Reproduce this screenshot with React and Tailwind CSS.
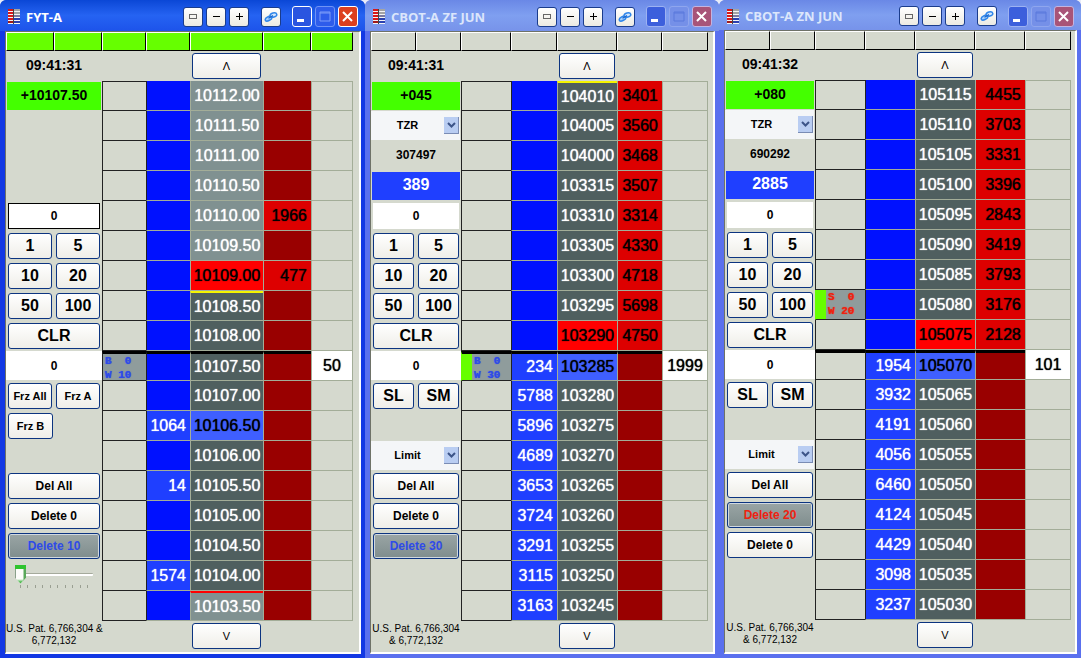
import React, { useState } from "react";
import clsx from "clsx";

const windows = [
  {
    title: "FYT-A",
    active: true,
    time: "09:41:31",
    titleHeight: "h-[31px]",
    panelWidth: "w-[96px]",
    bodyPad: "pr-[6px]",
    columns: "grid-cols-[44fr_44fr_73fr_48fr_42fr]",
    widths: ["w-[44px]", "w-[44px]", "w-[73px]", "w-[48px]", "w-[42px]"],
    strip: "bg-[#66ff00]",
    patent: ["U.S. Pat. 6,766,304 &", "6,772,132"],
    panel: [
      { type: "net", value: "+10107.50" },
      { type: "empty" },
      { type: "empty" },
      { type: "empty" },
      { type: "qty", label: "Order quantity", boxed: true },
      { type: "buttons", labels: ["1", "5"] },
      { type: "buttons", labels: ["10", "20"] },
      { type: "buttons", labels: ["50", "100"] },
      { type: "buttons", labels: ["CLR"] },
      { type: "position" },
      { type: "buttons", labels: ["Frz All", "Frz A"], size: "text-[11px]" },
      { type: "buttons", labels: ["Frz B", null], size: "text-[11px]" },
      { type: "empty" },
      { type: "buttons", labels: ["Del All"], size: "text-[12px]" },
      { type: "buttons", labels: ["Delete 0"], size: "text-[12px]" },
      { type: "delete", label: "Delete 10", color: "text-[#2f4be8]" },
      { type: "slider" },
      { type: "empty" },
    ],
    // price, bid, ask, price style
    rows: [
      ["10112.00", "", "", "light"],
      ["10111.50", "", "", "light"],
      ["10111.00", "", "", "light"],
      ["10110.50", "", "", "light"],
      ["10110.00", "", "1966", "light"],
      ["10109.50", "", "", "light"],
      ["10109.00", "", "477", "ask"],
      ["10108.50", "", "", "dark", "yellow"],
      ["10108.00", "", "", "dark"],
      ["10107.50", "", "", "dark"],
      ["10107.00", "", "", "dark"],
      ["10106.50", "1064", "", "bid"],
      ["10106.00", "", "", "dark"],
      ["10105.50", "14", "", "dark"],
      ["10105.00", "", "", "dark"],
      ["10104.50", "", "", "dark"],
      ["10104.00", "1574", "", "dark"],
      ["10103.50", "", "", "light", "red"],
    ],
    last: { row: 9, qty: "50" },
    order: { row: 9, side: "B", filled: "0", working: "10", fresh: false },
  },
  {
    title: "CBOT-A ZF JUN",
    active: false,
    time: "09:41:31",
    titleHeight: "h-[31px]",
    panelWidth: "w-[90px]",
    bodyPad: "pr-[5px]",
    columns: "grid-cols-[50fr_46fr_60fr_45fr_46fr]",
    widths: ["w-[50px]", "w-[46px]", "w-[60px]", "w-[45px]", "w-[46px]"],
    strip: "",
    patent: ["U.S. Pat. 6,766,304", "& 6,772,132"],
    panel: [
      { type: "net", value: "+045" },
      { type: "select", label: "Account", value: "TZR" },
      { type: "volume", value: "307497" },
      { type: "traded", value: "389" },
      { type: "qty", label: "Order quantity" },
      { type: "buttons", labels: ["1", "5"] },
      { type: "buttons", labels: ["10", "20"] },
      { type: "buttons", labels: ["50", "100"] },
      { type: "buttons", labels: ["CLR"] },
      { type: "position" },
      { type: "buttons", labels: ["SL", "SM"] },
      { type: "empty" },
      { type: "select", label: "Order type", value: "Limit" },
      { type: "buttons", labels: ["Del All"], size: "text-[12px]" },
      { type: "buttons", labels: ["Delete 0"], size: "text-[12px]" },
      { type: "delete", label: "Delete 30", color: "text-[#2f4be8]" },
      { type: "empty" },
      { type: "empty" },
    ],
    rows: [
      ["104010", "", "3401", "dark", "yellow"],
      ["104005", "", "3560", "dark"],
      ["104000", "", "3468", "dark"],
      ["103315", "", "3507", "dark"],
      ["103310", "", "3314", "dark"],
      ["103305", "", "4330", "dark"],
      ["103300", "", "4718", "dark"],
      ["103295", "", "5698", "dark"],
      ["103290", "", "4750", "ask"],
      ["103285", "234", "", "bid"],
      ["103280", "5788", "", "dark"],
      ["103275", "5896", "", "dark"],
      ["103270", "4689", "", "dark"],
      ["103265", "3653", "", "dark"],
      ["103260", "3724", "", "dark"],
      ["103255", "3291", "", "dark"],
      ["103250", "3115", "", "dark"],
      ["103245", "3163", "", "dark"],
    ],
    last: { row: 9, qty: "1999" },
    order: { row: 9, side: "B", filled: "0", working: "30", fresh: true },
  },
  {
    title: "CBOT-A ZN JUN",
    active: false,
    time: "09:41:32",
    titleHeight: "h-[30px]",
    panelWidth: "w-[90px]",
    bodyPad: "pr-[4px]",
    columns: "grid-cols-[50fr_50fr_60fr_50fr_46fr]",
    widths: ["w-[50px]", "w-[50px]", "w-[60px]", "w-[50px]", "w-[46px]"],
    strip: "",
    patent: ["U.S. Pat. 6,766,304", "& 6,772,132"],
    panel: [
      { type: "net", value: "+080" },
      { type: "select", label: "Account", value: "TZR" },
      { type: "volume", value: "690292" },
      { type: "traded", value: "2885" },
      { type: "qty", label: "Order quantity" },
      { type: "buttons", labels: ["1", "5"] },
      { type: "buttons", labels: ["10", "20"] },
      { type: "buttons", labels: ["50", "100"] },
      { type: "buttons", labels: ["CLR"] },
      { type: "position" },
      { type: "buttons", labels: ["SL", "SM"] },
      { type: "empty" },
      { type: "select", label: "Order type", value: "Limit" },
      { type: "buttons", labels: ["Del All"], size: "text-[12px]" },
      { type: "delete", label: "Delete 20", color: "text-[#ee2211]" },
      { type: "buttons", labels: ["Delete 0"], size: "text-[12px]" },
      { type: "empty" },
      { type: "empty" },
    ],
    rows: [
      ["105115", "", "4455", "dark"],
      ["105110", "", "3703", "dark"],
      ["105105", "", "3331", "dark"],
      ["105100", "", "3396", "dark"],
      ["105095", "", "2843", "dark"],
      ["105090", "", "3419", "dark"],
      ["105085", "", "3793", "dark"],
      ["105080", "", "3176", "dark"],
      ["105075", "", "2128", "ask"],
      ["105070", "1954", "", "bid"],
      ["105065", "3932", "", "dark"],
      ["105060", "4191", "", "dark"],
      ["105055", "4056", "", "dark"],
      ["105050", "6460", "", "dark"],
      ["105045", "4124", "", "dark"],
      ["105040", "4429", "", "dark"],
      ["105035", "3098", "", "dark"],
      ["105030", "3237", "", "dark"],
    ],
    last: { row: 9, qty: "101" },
    order: { row: 7, side: "S", filled: "0", working: "20", fresh: true },
  },
];

const priceStyles = {
  light: "bg-[#809191] text-white",
  dark: "bg-[#4f5f5f] text-white",
  ask: "bg-[#ff0000] text-black",
  bid: "bg-[#3f5fff] text-black",
};

function LadderIcon() {
  return (
    <svg width="12" height="15" viewBox="0 0 12 15" aria-hidden="true">
      <rect width="12" height="15" fill="#f4f4f4" />
      <path d="M0 0h5v2H0zM0 3h5v2H0zM0 6h5v2H0zM0 9h5v2H0z" fill="#d81818" />
      <path d="M0 12h5v2H0z" fill="#a01818" />
      <path d="M6 0h6v2H6zM6 3h6v2H6z" fill="#a4a4a4" />
      <path d="M6 6h6v2H6z" fill="#7a7aa0" />
      <path d="M6 9h6v2H6zM6 12h6v2H6z" fill="#2a40b0" />
      <path d="M5 0h1v15H5z" fill="#444" />
    </svg>
  );
}

function LinkIcon() {
  return (
    <svg width="14" height="12" viewBox="0 0 14 12" fill="none" aria-hidden="true">
      <ellipse cx="4.6" cy="7.600" rx="3.600" ry="1.900" transform="rotate(-28 4.600 7.600)" fill="#a8d0fa" stroke="#2f86ea" strokeWidth="1.500" />
      <ellipse cx="9.400" cy="4" rx="3.400" ry="2.100" transform="rotate(-14 9.400 4)" fill="#d2e7fd" stroke="#2f86ea" strokeWidth="1.500" />
      <path d="M4.500 7.200l4.500-2.600" stroke="#1c66cc" strokeWidth="1.300" />
    </svg>
  );
}

function ToolButton({ label, children }) {
  return (
    <button
      type="button"
      aria-label={label}
      className="flex h-[20px] w-[20px] items-center justify-center rounded-[3px] border border-[#1a3c8c] bg-linear-to-b from-white to-[#eceae2]"
    >
      {children}
    </button>
  );
}

function FrameButton({ label, className, children }) {
  return (
    <button
      type="button"
      aria-label={label}
      className={clsx("flex h-[21px] w-[20px] items-center justify-center rounded-[3px] border", className)}
    >
      <svg width="18" height="19" viewBox="0 0 18 19" fill="none" aria-hidden="true">
        {children}
      </svg>
    </button>
  );
}

function TitleBar({ win }) {
  return (
    <header
      className={clsx(
        "flex items-center rounded-t-[6px] pt-[2px] pr-[7px] pl-[8px]",
        win.titleHeight,
        win.active
          ? "bg-linear-to-b from-[#0a47d6] via-[#2563f2] to-[#1d53ea]"
          : "bg-linear-to-b from-[#6a88e6] via-[#7f9ff0] to-[#7793ea]"
      )}
    >
      <LadderIcon />
      <h2
        className={clsx(
          "ml-[6px] flex-1 truncate font-['Open_Sans',sans-serif] text-[13px] leading-[20px] font-bold",
          win.active ? "text-white" : "text-[#dce6fb]"
        )}
      >
        {win.title}
      </h2>
      <div className="flex gap-[3px]">
        <ToolButton label="Compact">
          <span className="h-[5px] w-[8px] border border-[#666]" />
        </ToolButton>
        <ToolButton label="Narrower">
          <span className="h-px w-[7px] bg-black" />
        </ToolButton>
        <ToolButton label="Wider">
          <svg width="7" height="7" viewBox="0 0 7 7" aria-hidden="true">
            <path d="M3 0h1v7H3zM0 3h7v1H0z" fill="#000" />
          </svg>
        </ToolButton>
      </div>
      <div className="ml-[12px]">
        <ToolButton label="Link">
          <LinkIcon />
        </ToolButton>
      </div>
      <div className="ml-[11px] flex gap-[3px]">
        <FrameButton
          label="Minimize"
          className={win.active ? "border-white bg-[#2a55e0]" : "border-[#9db2f2] bg-[#3c5fdc]"}
        >
          <path d="M4 12h7v3H4z" fill="#fff" />
        </FrameButton>
        <FrameButton
          label="Maximize"
          className={win.active ? "border-[#6f93f5] bg-[#2e5ceb]" : "border-[#8fa6ee] bg-[#7590e8]"}
        >
          <path d="M4 5h10v9H4zM4 6h10" stroke={win.active ? "#7c9cf8" : "#5b79dc"} strokeWidth="1" />
        </FrameButton>
        <FrameButton
          label="Close"
          className={win.active ? "border-white bg-[#dd3f1f]" : "border-[#c4b4e0] bg-[#a85478]"}
        >
          <path d="M4 5l9 9M13 5l-9 9" stroke="#fff" strokeWidth="2" />
        </FrameButton>
      </div>
    </header>
  );
}

function XpButton({ className, children }) {
  return (
    <button
      type="button"
      className={clsx(
        "h-[26px] min-w-0 flex-1 rounded-[3px] border border-[#0c3480] bg-linear-to-b from-white to-[#efeee8] leading-[24px] whitespace-nowrap",
        className
      )}
    >
      {children}
    </button>
  );
}

function PanelRow({ item }) {
  const [value, setValue] = useState("0");

  switch (item.type) {
    case "net":
      return (
        <div className="h-[30px] p-px">
          <div className="h-[28px] bg-[#44ff00] text-center text-[14px] leading-[26px] font-bold">{item.value}</div>
        </div>
      );
    case "volume":
      return <div className="h-[30px] text-center text-[12px] leading-[28px] font-bold">{item.value}</div>;
    case "traded":
      return (
        <div className="h-[30px] p-px">
          <div className="h-[28px] bg-[#1f3fff] text-center text-[16px] leading-[26px] font-bold text-white">
            {item.value}
          </div>
        </div>
      );
    case "select":
      return (
        <div className="relative h-[30px] pr-px pb-px">
          <select
            aria-label={item.label}
            defaultValue={item.value}
            className="h-full w-full appearance-none bg-[#f4f6f8] pr-[16px] text-center text-[11px] font-bold [text-align-last:center]"
          >
            <option>{item.value}</option>
          </select>
          <span className="pointer-events-none absolute top-[6px] right-[2px] flex h-[17px] w-[15px] items-center justify-center border-r border-b border-[#7a8cb4] bg-[#b9cdf2]">
            <svg width="9" height="6" viewBox="0 0 9 6" fill="none" aria-hidden="true">
              <path d="M1 1l3.500 3.500L8 1" stroke="#3c5488" strokeWidth="2" />
            </svg>
          </span>
        </div>
      );
    case "qty":
      return (
        <div className="h-[30px] p-[2px]">
          <input
            aria-label={item.label}
            value={value}
            onChange={(e) => setValue(e.target.value)}
            className={clsx(
              "block h-[26px] w-full border bg-white text-center text-[12px] font-bold",
              item.boxed ? "border-black" : "border-white"
            )}
          />
        </div>
      );
    case "position":
      return (
        <div className="h-[30px] pb-px">
          <input
            aria-label="Position"
            value={value}
            onChange={(e) => setValue(e.target.value)}
            className="block h-[29px] w-full bg-white text-center text-[12px] font-bold"
          />
        </div>
      );
    case "buttons":
      return (
        <div className="flex h-[30px] gap-[4px] p-[2px]">
          {item.labels.map((label, i) =>
            label ? (
              <XpButton key={i} className={clsx("font-bold", item.size || "text-[16px]")}>
                {label}
              </XpButton>
            ) : (
              <span key={i} className="flex-1" />
            )
          )}
        </div>
      );
    case "delete":
      return (
        <div className="flex h-[30px] p-[2px]">
          <button
            type="button"
            className={clsx(
              "h-[26px] flex-1 rounded-[3px] border border-[#0c3480] bg-linear-to-b from-[#9aa5a5] to-[#7f8d8d] text-[12px] leading-[22px] font-bold inset-ring inset-ring-[#d0d8e0]",
              item.color
            )}
          >
            {item.label}
          </button>
        </div>
      );
    case "slider":
      return (
        <div className="h-[30px] pt-[3px] pr-[9px] pl-[9px]">
          <input
            type="range"
            aria-label="Depth"
            min="0"
            max="9"
            defaultValue="0"
            className="block h-[20px] w-full appearance-none bg-transparent [&::-webkit-slider-runnable-track]:h-[3px] [&::-webkit-slider-runnable-track]:rounded-[1px] [&::-webkit-slider-runnable-track]:border-t [&::-webkit-slider-runnable-track]:border-[#a5aa9c] [&::-webkit-slider-runnable-track]:bg-white [&::-webkit-slider-thumb]:-mt-[9px] [&::-webkit-slider-thumb]:h-[19px] [&::-webkit-slider-thumb]:w-[11px] [&::-webkit-slider-thumb]:appearance-none [&::-webkit-slider-thumb]:bg-[linear-gradient(to_bottom,#2fc42f_0_4px,transparent_4px_14px,#4cb84c_17px),linear-gradient(to_right,#8aa08a_0_1px,#fcfcfa_1px_8px,#5aa85a_9px)] [&::-webkit-slider-thumb]:[clip-path:polygon(0_0,100%_0,100%_70%,50%_100%,0_70%)]"
          />
          <div className="flex justify-between px-[5px] pt-px">
            {Array.from({ length: 10 }, (_, i) => (
              <span key={i} className="h-[3px] w-px bg-[#9a9f92]" />
            ))}
          </div>
        </div>
      );
    default:
      return <div className="h-[30px]" />;
  }
}

function WorkingOrder({ order, tall }) {
  return (
    <div className={clsx("flex", tall ? "h-[29px]" : "h-[26px]")}>
      {order.fresh && <span className="w-[10px] shrink-0 bg-[#66ff00]" />}
      <div
        className={clsx(
          "min-w-0 flex-1 bg-[#8f9c9c] pl-[2px] text-left font-['Liberation_Mono',monospace] text-[11px] leading-[14px] font-bold whitespace-pre",
          order.side === "B" ? "text-[#2f4be8]" : "text-[#ee2211]"
        )}
      >
        <div>{`${order.side} ${order.filled.padStart(2)}`}</div>
        <div>{`W ${order.working.padStart(2)}`}</div>
      </div>
    </div>
  );
}

function Ladder({ win }) {
  return (
    <table
      aria-label={`${win.title} ladder`}
      className="w-full table-fixed border-separate border-spacing-0 text-[16px] leading-[24px] [text-shadow:0_0_1px_currentColor]"
    >
      <colgroup>
        {win.widths.map((width, i) => (
          <col key={i} className={width} />
        ))}
      </colgroup>
      <tbody>
        {win.rows.map(([price, bid, ask, style, mark], index) => {
          const isLast = index === win.last.row;
          const top = isLast ? "border-t-[3px] border-t-black" : "";
          const hasOrder = index === win.order.row;

          return (
            <tr key={price} className="h-[30px]">
              <td
                className={clsx(
                  "h-[30px] border-b border-l border-[#222] p-0",
                  index === 0 && "border-t",
                  hasOrder && win.order.fresh && "border-l-[#66ff00]",
                  top
                )}
              >
                {hasOrder && <WorkingOrder order={win.order} tall={!isLast} />}
              </td>
              <td
                className={clsx(
                  "border-b border-l border-b-[#a3ad98] border-l-[#222] p-0 pr-[4px] text-right text-white",
                  bid ? "bg-[#1f3fff]" : "bg-[#0011ff]",
                  top
                )}
              >
                {bid}
              </td>
              <td
                className={clsx(
                  "border-b border-l border-b-[#a3ad98] border-l-[#a3ad98] p-0 text-center",
                  priceStyles[style],
                  mark === "yellow" && "border-t-2 border-t-[#f4f400]",
                  mark === "red" && "border-t-2 border-t-[#ff0000]",
                  top
                )}
              >
                {price}
              </td>
              <td
                className={clsx(
                  "border-b border-l border-b-[#a3ad98] border-l-[#a3ad98] p-0 pr-[4px] text-right text-black",
                  ask ? "bg-[#dd0000]" : "bg-[#990000]",
                  top
                )}
              >
                {ask}
              </td>
              <td
                className={clsx(
                  "border-r border-b border-l border-[#a3ad98] p-0 text-center",
                  index === 0 && "border-t",
                  isLast && "bg-white"
                )}
              >
                {isLast && win.last.qty}
              </td>
            </tr>
          );
        })}
      </tbody>
    </table>
  );
}

function StripCell({ className }) {
  return <span className={clsx("h-[19px] border-t border-r border-b border-l border-t-white border-r-black border-b-black border-l-white", className)} />;
}

function TradingWindow({ win }) {
  return (
    <section
      className={clsx("flex min-w-0 flex-col rounded-t-[7px]", win.active ? "bg-[#0a2fe0]" : "bg-[#4a5ee8]")}
    >
      <TitleBar win={win} />
      <div
        className={clsx(
          "flex flex-1 flex-col border-r-4 border-b-4 border-l-[5px]",
          win.active ? "border-[#1238e4]" : "border-[#5a70ee]"
        )}
      >
        <div
          className={clsx(
            "flex-1 border-t border-r-2 border-b-2 border-l border-t-[#6e7268] border-r-white border-b-white border-l-[#6e7268] bg-[#d5d9ce] pb-px",
            win.bodyPad
          )}
        >
          <div className="flex">
            <div className={clsx("grid shrink-0 grid-cols-2", win.panelWidth)}>
              <StripCell className={win.strip} />
              <StripCell className={win.strip} />
            </div>
            <div className={clsx("grid flex-1", win.columns)}>
              {win.widths.map((_, i) => (
                <StripCell key={i} className={win.strip} />
              ))}
            </div>
          </div>

          <div className="flex">
            <div className={clsx("shrink-0", win.panelWidth)}>
              <div className="h-[30px] text-center text-[14px] leading-[28px] font-bold">{win.time}</div>
              {win.panel.map((item, i) => (
                <PanelRow key={i} item={item} />
              ))}
              <div className="pt-[2px] text-center text-[10px] leading-[12px] whitespace-nowrap">
                {win.patent.map((line) => (
                  <div key={line}>{line}</div>
                ))}
              </div>
            </div>

            <div className="min-w-0 flex-1">
              <div className={clsx("grid h-[30px] items-center", win.columns)}>
                <div className="col-start-3 flex px-[2px]">
                  <XpButton className="text-[11px]">Λ</XpButton>
                </div>
              </div>
              <Ladder win={win} />
              <div className={clsx("grid h-[30px] items-center", win.columns)}>
                <div className="col-start-3 flex px-[2px]">
                  <XpButton className="text-[11px]">V</XpButton>
                </div>
              </div>
            </div>
          </div>
        </div>
      </div>
    </section>
  );
}

export default function App() {
  return (
    <main className="grid grid-cols-[365fr_354fr_362fr] bg-[#e8ecf8] font-['Liberation_Sans',Arial,sans-serif] text-black">
      {windows.map((win) => (
        <TradingWindow key={win.title} win={win} />
      ))}
    </main>
  );
}
